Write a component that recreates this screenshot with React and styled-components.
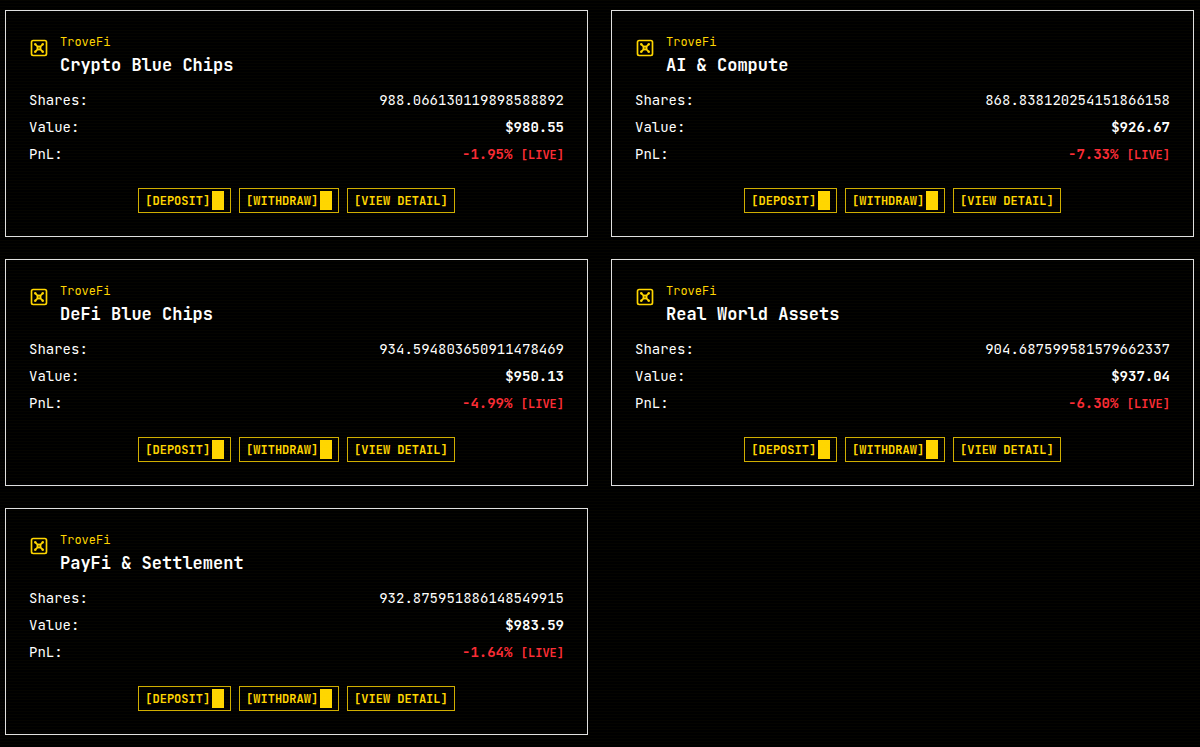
import React from "react";
import styled, { createGlobalStyle } from "styled-components";
import { Vault } from "lucide-react";

const vaults = [
  { id: 1, name: "Crypto Blue Chips", shares: "988.066130119898588892", value: "$980.55", pnl: "-1.95%" },
  { id: 2, name: "AI & Compute", shares: "868.838120254151866158", value: "$926.67", pnl: "-7.33%" },
  { id: 3, name: "DeFi Blue Chips", shares: "934.594803650911478469", value: "$950.13", pnl: "-4.99%" },
  { id: 4, name: "Real World Assets", shares: "904.687599581579662337", value: "$937.04", pnl: "-6.30%" },
  { id: 5, name: "PayFi & Settlement", shares: "932.875951886148549915", value: "$983.59", pnl: "-1.64%" },
];

const VaultCard = ({ name, shares, value, pnl }) => {
  return (
    <Card>
      <Header>
        <Vault size={20} color="#ffd600" aria-hidden="true" />
        <div>
          <Brand>TroveFi</Brand>
          <Title>{name}</Title>
        </div>
      </Header>
      <Stats>
        <Row>
          <dt>Shares:</dt>
          <Amount>{shares}</Amount>
        </Row>
        <Row>
          <dt>Value:</dt>
          <Amount $bold>{value}</Amount>
        </Row>
        <Row>
          <dt>PnL:</dt>
          <Amount $bold $loss>
            {pnl} <Live>[LIVE]</Live>
          </Amount>
        </Row>
      </Stats>
      <Actions>
        <Button type="button">[DEPOSIT]<Cursor /></Button>
        <Button type="button">[WITHDRAW]<Cursor /></Button>
        <Button type="button">[VIEW DETAIL]</Button>
      </Actions>
    </Card>
  );
};

const App = () => {
  return (
    <>
      <GlobalStyle />
      <Grid>
        {vaults.map((vault) => (
          <VaultCard key={vault.id} {...vault} />
        ))}
      </Grid>
      <Scanlines />
    </>
  );
};

const GlobalStyle = createGlobalStyle`
  * {
    box-sizing: border-box;
    margin: 0;
    padding: 0;
  }
  body {
    background-color: #000000;
    color: #ffffff;
    font-family: "JetBrains Mono", "DejaVu Sans Mono", monospace;
    font-size: 14px;
  }
`;

const Grid = styled.main`
  display: grid;
  grid-template-columns: repeat(2, minmax(0, 1fr));
  gap: 22px 23px;
  padding: 10px 6px 12px 5px;
`;

const Card = styled.section`
  border: 1px solid #e0e0e0;
  padding: 23px;
`;

const Header = styled.header`
  display: flex;
  gap: 11px;
  margin-bottom: 7px;
  svg {
    flex-shrink: 0;
    margin-top: 4px;
  }
`;

const Brand = styled.p`
  color: #ffd600;
  font-size: 12px;
  line-height: 17px;
`;

const Title = styled.h2`
  font-size: 17px;
  line-height: 29px;
`;

const Stats = styled.dl`
  line-height: 27px;
`;

const Row = styled.div`
  display: flex;
  justify-content: space-between;
`;

const Amount = styled.dd`
  color: ${({ $loss }) => ($loss ? "#fb2c36" : "inherit")};
  font-weight: ${({ $bold }) => ($bold ? 700 : 400)};
`;

const Live = styled.span`
  font-size: 12px;
`;

const Actions = styled.div`
  display: flex;
  justify-content: center;
  gap: 8px;
  margin-top: 19px;
`;

const Button = styled.button`
  display: inline-flex;
  align-items: center;
  gap: 2px;
  height: 25px;
  padding: 0 6px;
  border: 1px solid #d0ae00;
  background: transparent;
  color: #ffd600;
  font-family: inherit;
  font-size: 12px;
  font-weight: 700;
  cursor: pointer;
`;

const Cursor = styled.span`
  width: 12px;
  height: 19px;
  background-color: #ffd600;
`;

const Scanlines = styled.div`
  position: fixed;
  inset: 0;
  pointer-events: none;
  background: repeating-linear-gradient(
    to bottom,
    rgba(255, 214, 0, 0.02) 0,
    rgba(255, 214, 0, 0.02) 1px,
    transparent 1px,
    transparent 3px
  );
`;

export default App;
